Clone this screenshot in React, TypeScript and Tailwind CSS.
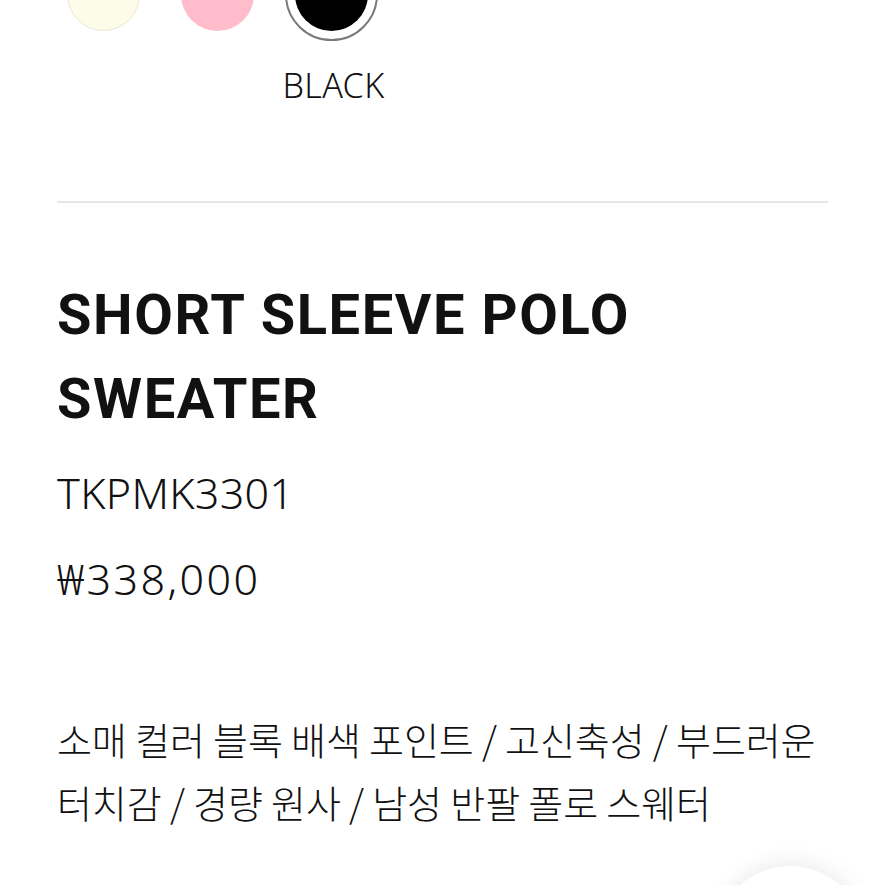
const swatches = [
  { name: 'IVORY', color: 'bg-[#fdfce9]', border: 'border border-[#e9e7d6]' },
  { name: 'PINK', color: 'bg-[#ffbccb]', border: '' },
  { name: 'BLACK', color: 'bg-black', border: '' },
];

const selected = 'BLACK';

const latin = { fontFamily: '"Noto Sans", "Noto Sans CJK KR", sans-serif' };

export default function App() {
  return (
    <div
      className="relative h-[885px] w-[885px] overflow-hidden bg-white text-[#111]"
      style={{ fontFamily: '"Noto Sans CJK KR", "Noto Sans", sans-serif' }}
    >
      <div className="px-[57px]">
        {/* color options */}
        <div className="-mt-[52px] flex gap-[21px]">
          {swatches.map((s) => (
            <div key={s.name} className="flex w-[93px] flex-col items-center">
              <div
                className={
                  s.name === selected
                    ? 'flex h-[93px] w-[93px] items-center justify-center rounded-full border-2 border-[#7a7a7a]'
                    : 'flex h-[93px] w-[93px] items-center justify-center rounded-full'
                }
              >
                <div className={`h-[73px] w-[73px] rounded-full ${s.color} ${s.border}`} />
              </div>
              {s.name === selected && (
                <span
                  className="ml-[4px] mt-[24px] whitespace-nowrap text-[34px] font-light leading-[40px] tracking-[0.4px]"
                  style={latin}
                >
                  {s.name}
                </span>
              )}
            </div>
          ))}
        </div>

        <div className="mt-[96px] h-[2px] bg-[#e6e6e6]" />

        <h1
          className="mt-[70px] text-[56px] font-bold leading-[84px] tracking-[1.6px] text-[#111]"
          style={{ fontFamily: 'Roboto, "Noto Sans", sans-serif' }}
        >
          SHORT SLEEVE POLO
          <br />
          SWEATER
        </h1>

        <p className="mt-[22px] text-[43px] font-light leading-[60px] tracking-[0.3px]" style={latin}>
          TKPMK3301
        </p>
        <p className="mt-[26px] text-[43px] font-light leading-[60px] tracking-[2.4px]" style={latin}>
          ₩338,000
        </p>

        <p className="mt-[98px] text-[38px] font-light leading-[63px] tracking-[-0.1px]">
          소매 컬러 블록 배색 포인트 / 고신축성 / 부드러운
          <br />
          터치감 / 경량 원사 / 남성 반팔 폴로 스웨터
        </p>
      </div>

      {/* floating button peeking from the bottom */}
      <div className="absolute left-[715px] top-[866px] h-[150px] w-[150px] rounded-full bg-white shadow-[0_0_24px_rgba(0,0,0,0.10)]" />
    </div>
  );
}
